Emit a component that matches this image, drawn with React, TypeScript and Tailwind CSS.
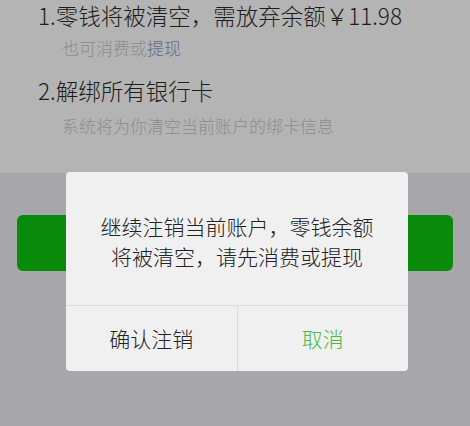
export default function App() {
  return (
    <div className="relative w-[470px] h-[426px] overflow-hidden bg-[#a7a6ab] font-['Noto_Sans_CJK_SC','Noto_Sans',sans-serif] font-light">
      {/* page content under the mask */}
      <section className="h-[173px] bg-[#b4b4b4] pl-[38px] pt-[2px]">
        <p className="text-[22.5px] leading-[26px] text-[#1c1c1c]">1.零钱将被清空，需放弃余额￥11.98</p>
        <p className="mt-[9px] pl-[24px] text-[17px] leading-[22px] text-[#8c8c8c]">
          也可消费或<span className="text-[#5d6a8a]">提现</span>
        </p>
        <p className="mt-[18px] text-[22.5px] leading-[26px] text-[#1c1c1c]">2.解绑所有银行卡</p>
        <p className="mt-[12px] pl-[24px] text-[17px] leading-[22px] text-[#8c8c8c]">系统将为你清空当前账户的绑卡信息</p>
      </section>

      <div className="mx-[17px] mt-[42px] h-[56px] rounded-[6px] bg-[#0a8a0a]" />

      {/* dialog */}
      <div className="absolute left-[66px] top-[172px] w-[342px] h-[199px] rounded-[4px] bg-[#f0f0f0] flex flex-col">
        <div className="flex-1 flex items-center justify-center pt-[5px] text-center text-[21px] leading-[30px] text-[#222]">
          <p>
            继续注销当前账户，零钱余额
            <br />
            将被清空，请先消费或提现
          </p>
        </div>
        <div className="h-[66px] flex border-t border-[#dcdcdc]">
          <button className="flex-1 text-[21px] text-[#222] border-r border-[#dcdcdc]">确认注销</button>
          <button className="flex-1 text-[21px] text-[#4cb84f]">取消</button>
        </div>
      </div>
    </div>
  );
}
